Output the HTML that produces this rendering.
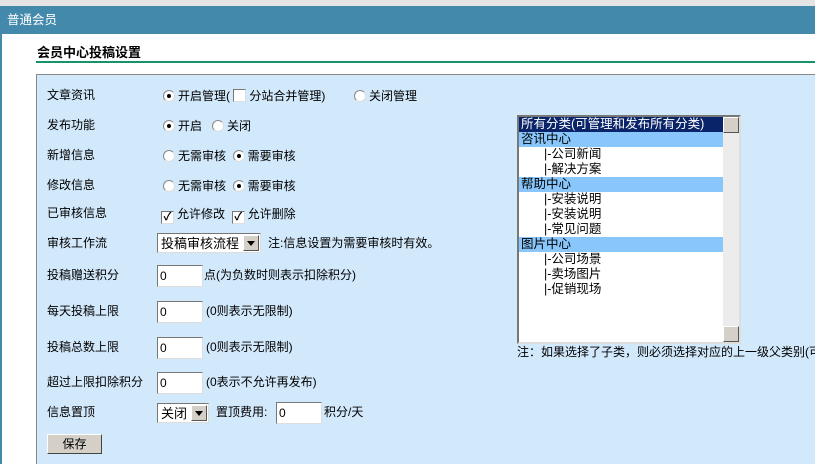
<!DOCTYPE html>
<html><head><meta charset="utf-8"><style>
*{margin:0;padding:0;box-sizing:border-box}
html,body{width:815px;height:464px;overflow:hidden}
body{background:#fff;font:12px "Liberation Sans","Noto Sans CJK SC",sans-serif;color:#000;position:relative}
.a{position:absolute;white-space:nowrap;line-height:14px}
.r{display:inline-block;width:12px;height:12px;border-radius:50%;background:#fff;border:1px solid #888;border-right-color:#ddd;border-bottom-color:#ddd;vertical-align:-2px;position:relative;margin-right:3px}
.r.on::after{content:"";position:absolute;left:3px;top:3px;width:4px;height:4px;border-radius:50%;background:#000}
.c{display:inline-block;width:13px;height:13px;background:#fff;border:1px solid #777;border-right-color:#ddd;border-bottom-color:#ddd;vertical-align:-2px;margin-right:3px;font-size:11px;line-height:11px;text-align:center;font-weight:bold}
.in{position:absolute;width:46px;height:22px;background:#fff;border:1px solid #777;border-right-color:#ddd;border-bottom-color:#ddd;padding:3px 2px;line-height:14px}
.sel{position:absolute;height:20px;background:#fff;border:1px solid #777;border-right-color:#ddd;border-bottom-color:#ddd;padding:2px 3px;font-size:13px;line-height:15px}
.sel i{position:absolute;right:1px;top:1px;width:16px;height:16px;background:#d4d0c8;border:1px solid #fff;border-right-color:#555;border-bottom-color:#555}
.sel i::after{content:"";position:absolute;left:3px;top:5px;border:4px solid transparent;border-top:5px solid #000}
.lb{position:absolute;left:517px;top:115px;width:224px;height:229px;background:#fff;border:2px solid #777;border-right-color:#ddd;border-bottom-color:#ddd;font-size:12.5px}
.lb div{height:15px;line-height:15px;padding-left:2px;white-space:nowrap}
.h{background:#88c6fb}
.s{padding-left:25px!important}
</style></head><body>
<div style="position:absolute;left:0;top:0;width:815px;height:6px;background:#e4e4e4"></div>
<div style="position:absolute;left:0;top:6px;width:815px;height:28px;background:#4389ab;color:#fff;font-size:12.5px;line-height:28px;padding-left:7px">普通会员</div>
<div style="position:absolute;left:0;top:34px;width:2px;height:430px;background:#4389ab"></div>
<div class="a" style="left:37px;top:46px;font-weight:bold;font-size:13px">会员中心投稿设置</div>
<div style="position:absolute;left:36px;top:61px;width:779px;height:2px;background:#159467"></div>
<div style="position:absolute;left:36px;top:74px;width:790px;height:395px;background:#d2e8fb;border:1px solid #888"></div>

<div class="a" style="left:47px;top:88px">文章资讯</div>
<div class="a" style="left:163px;top:89px"><span class="r on"></span>开启管理( <span class="c"></span>分站合并管理)</div>
<div class="a" style="left:354px;top:89px"><span class="r"></span>关闭管理</div>

<div class="a" style="left:47px;top:118px">发布功能</div>
<div class="a" style="left:163px;top:119px"><span class="r on"></span>开启 &nbsp;&nbsp;<span class="r"></span>关闭</div>

<div class="a" style="left:47px;top:148px">新增信息</div>
<div class="a" style="left:163px;top:149px"><span class="r"></span>无需审核 &nbsp;<span class="r on"></span>需要审核</div>

<div class="a" style="left:47px;top:178px">修改信息</div>
<div class="a" style="left:163px;top:179px"><span class="r"></span>无需审核 &nbsp;<span class="r on"></span>需要审核</div>

<div class="a" style="left:47px;top:206px">已审核信息</div>
<div class="a" style="left:161px;top:207px"><span class="c">✓</span>允许修改 &nbsp;<span class="c">✓</span>允许删除</div>

<div class="a" style="left:47px;top:236px">审核工作流</div>
<div class="sel" style="left:157px;top:233px;width:104px">投稿审核流程<i></i></div>
<div class="a" style="left:268px;top:236px">注:信息设置为需要审核时有效。</div>

<div class="a" style="left:47px;top:268px">投稿赠送积分</div>
<div class="in" style="left:157px;top:265px">0</div>
<div class="a" style="left:204px;top:268px">点(为负数时则表示扣除积分)</div>

<div class="a" style="left:47px;top:304px">每天投稿上限</div>
<div class="in" style="left:157px;top:301px">0</div>
<div class="a" style="left:206px;top:304px">(0则表示无限制)</div>

<div class="a" style="left:47px;top:340px">投稿总数上限</div>
<div class="in" style="left:157px;top:337px">0</div>
<div class="a" style="left:206px;top:340px">(0则表示无限制)</div>

<div class="a" style="left:47px;top:375px">超过上限扣除积分</div>
<div class="in" style="left:157px;top:372px">0</div>
<div class="a" style="left:206px;top:375px">(0表示不允许再发布)</div>

<div class="a" style="left:47px;top:405px">信息置顶</div>
<div class="sel" style="left:157px;top:403px;width:52px">关闭<i></i></div>
<div class="a" style="left:216px;top:405px">置顶费用:</div>
<div class="in" style="left:276px;top:402px">0</div>
<div class="a" style="left:324px;top:405px">积分/天</div>

<div style="position:absolute;left:47px;top:434px;width:55px;height:20px;background:#d4d0c8;border:1px solid #fff;border-right-color:#444;border-bottom-color:#444;text-align:center;line-height:18px">保存</div>

<div class="lb">
<div style="background:#0a246a;color:#fff">所有分类(可管理和发布所有分类)</div>
<div class="h">咨讯中心</div>
<div class="s">|-公司新闻</div>
<div class="s">|-解决方案</div>
<div class="h">帮助中心</div>
<div class="s">|-安装说明</div>
<div class="s">|-安装说明</div>
<div class="s">|-常见问题</div>
<div class="h">图片中心</div>
<div class="s">|-公司场景</div>
<div class="s">|-卖场图片</div>
<div class="s">|-促销现场</div>
<div style="position:absolute;right:0;top:0;width:16px;height:225px;background:#ececec;padding:0"></div>
<div style="position:absolute;right:0;top:0;width:16px;height:16px;background:#d4d0c8;border:1px solid #fff;border-right-color:#555;border-bottom-color:#555;padding:0"></div>
<div style="position:absolute;right:0;top:209px;width:16px;height:16px;background:#d4d0c8;border:1px solid #fff;border-right-color:#555;border-bottom-color:#555;padding:0"></div>
</div>
<div class="a" style="left:517px;top:345px">注：如果选择了子类，则必须选择对应的上一级父类别(可</div>
</body></html>
